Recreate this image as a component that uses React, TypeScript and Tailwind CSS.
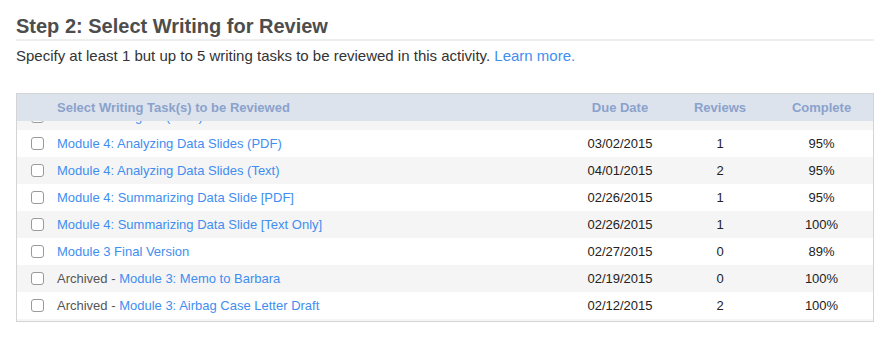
import React from "react";

type Row = {
  archived?: boolean;
  title: string;
  date: string;
  reviews: string;
  complete: string;
};

const rows: Row[] = [
  { title: "Module 4: Original (Draft)", date: "03/02/2015", reviews: "1", complete: "95%" },
  { title: "Module 4: Analyzing Data Slides (PDF)", date: "03/02/2015", reviews: "1", complete: "95%" },
  { title: "Module 4: Analyzing Data Slides (Text)", date: "04/01/2015", reviews: "2", complete: "95%" },
  { title: "Module 4: Summarizing Data Slide [PDF]", date: "02/26/2015", reviews: "1", complete: "95%" },
  { title: "Module 4: Summarizing Data Slide [Text Only]", date: "02/26/2015", reviews: "1", complete: "100%" },
  { title: "Module 3 Final Version", date: "02/27/2015", reviews: "0", complete: "89%" },
  { archived: true, title: "Module 3: Memo to Barbara", date: "02/19/2015", reviews: "0", complete: "100%" },
  { archived: true, title: "Module 3: Airbag Case Letter Draft", date: "02/12/2015", reviews: "2", complete: "100%" },
  { title: "Module 2: Draft", date: "02/01/2015", reviews: "1", complete: "100%" },
];

function Checkbox() {
  return (
    <span className="inline-block w-[13px] h-[13px] rounded-[3px] border border-[#9a9a9a] bg-white" />
  );
}

export default function App() {
  return (
    <div
      className="w-[892px] h-[345px] bg-white text-[#333] overflow-hidden"
      style={{ fontFamily: '"Liberation Sans", Arial, Helvetica, sans-serif' }}
    >
      <div className="pl-[16px] pr-[18px] pt-[14px]">
        <h2 className="text-[20px] leading-[24px] font-bold text-[#4d4d4d] pb-[1px] border-b-2 border-[#eeeeee]">
          Step 2: Select Writing for Review
        </h2>
        <p className="mt-[5px] text-[15px] leading-[20px] text-[#333]">
          Specify at least 1 but up to 5 writing tasks to be reviewed in this activity.{" "}
          <span className="text-[#3f8ef0]">Learn more.</span>
        </p>
      </div>

      <div className="ml-[16px] w-[858px] mt-[27px] border border-[#d4d4d4] text-[13px]">
        <div className="flex h-[27px] items-center bg-[#dde3ec] font-bold text-[#8aa2cc]">
          <div className="w-[40px]" />
          <div className="w-[513px]">Select Writing Task(s) to be Reviewed</div>
          <div className="w-[100px] text-center">Due Date</div>
          <div className="w-[100px] text-center">Reviews</div>
          <div className="w-[103px] text-center">Complete</div>
        </div>
        <div className="h-[200px] overflow-hidden">
          {rows.map((r, i) => (
            <div
              key={i}
              className={`flex h-[27px] items-center ${i === 0 ? "mt-[-18px]" : ""} ${
                i % 2 === 0 ? "bg-[#f5f5f5]" : "bg-white"
              }`}
            >
              <div className="w-[40px] pl-[14px] flex items-center">
                <Checkbox />
              </div>
              <div className="w-[513px] whitespace-nowrap">
                {r.archived && <span className="text-[#555]">Archived - </span>}
                <span className="text-[#3f8ef0]">{r.title}</span>
              </div>
              <div className="w-[100px] text-center text-[#222]">{r.date}</div>
              <div className="w-[100px] text-center text-[#222]">{r.reviews}</div>
              <div className="w-[103px] text-center text-[#222]">{r.complete}</div>
            </div>
          ))}
        </div>
      </div>
    </div>
  );
}
